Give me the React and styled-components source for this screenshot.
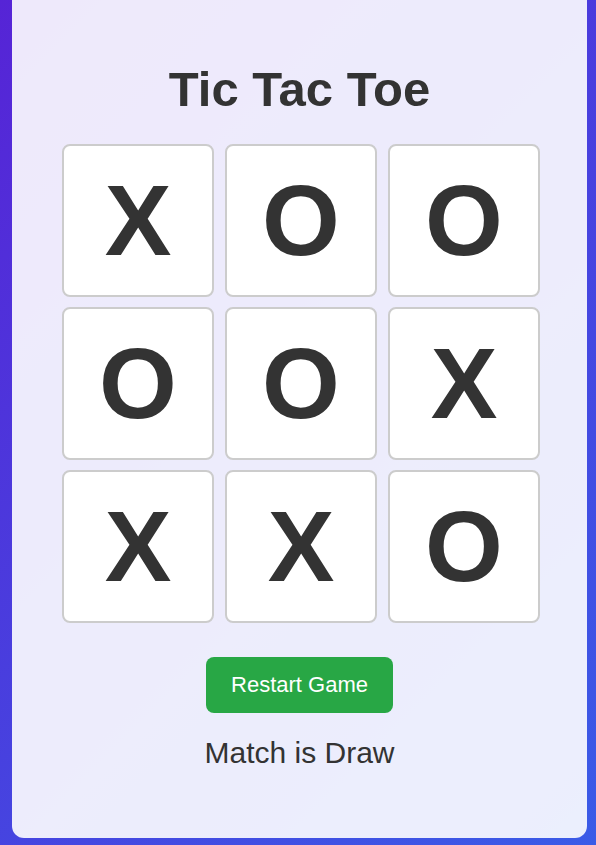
import React from 'react'
import styled, { createGlobalStyle } from 'styled-components'

const board = ['X', 'O', 'O', 'O', 'O', 'X', 'X', 'X', 'O']

function App() {
    return (
        <>
            <GlobalStyle />
            <Page>
                <Card>
                    <Title>Tic Tac Toe</Title>
                    <Board>
                        {board.map((mark, i) => (
                            <Cell key={i}>{mark}</Cell>
                        ))}
                    </Board>
                    <Restart>Restart Game</Restart>
                    <Status>Match is Draw</Status>
                </Card>
            </Page>
        </>
    )
}

export default App

const GlobalStyle = createGlobalStyle`
*{
    box-sizing:border-box;
}
body{
    margin:0;
    font-family:"Liberation Sans", Arial, sans-serif;
}
`
const Page = styled.div`
height:100vh;
overflow:hidden;
display:flex;
flex-direction:column;
align-items:flex-start;
padding:0 9px 7px 12px;
background:linear-gradient(135deg, #5624d6 0%, #3a5be7 100%);
`
const Card = styled.div`
width:575px;
margin-top:-30px;
padding:95px 0 67px;
background:rgba(255,255,255,0.9);
border-radius:12px;
display:flex;
flex-direction:column;
align-items:center;
`
const Title = styled.h1`
margin:0;
font-size:49px;
line-height:49px;
font-weight:bold;
color:#333;
`
const Board = styled.div`
display:grid;
grid-template-columns:repeat(3, 152.5px);
grid-auto-rows:152.5px;
gap:10.5px;
margin:30px 0 0 3px;
`
const Cell = styled.div`
display:flex;
align-items:center;
justify-content:center;
background:#fff;
border:2px solid #ccc;
border-radius:8px;
font-size:100px;
font-weight:bold;
color:#333;
`
const Restart = styled.button`
margin-top:34px;
height:56px;
padding:0 25px;
border:none;
border-radius:8px;
background:#28a745;
color:#fff;
font-family:inherit;
font-size:22px;
cursor:pointer;
`
const Status = styled.p`
margin:23.5px 0 0;
font-size:30px;
line-height:1.15;
color:#333;
`
